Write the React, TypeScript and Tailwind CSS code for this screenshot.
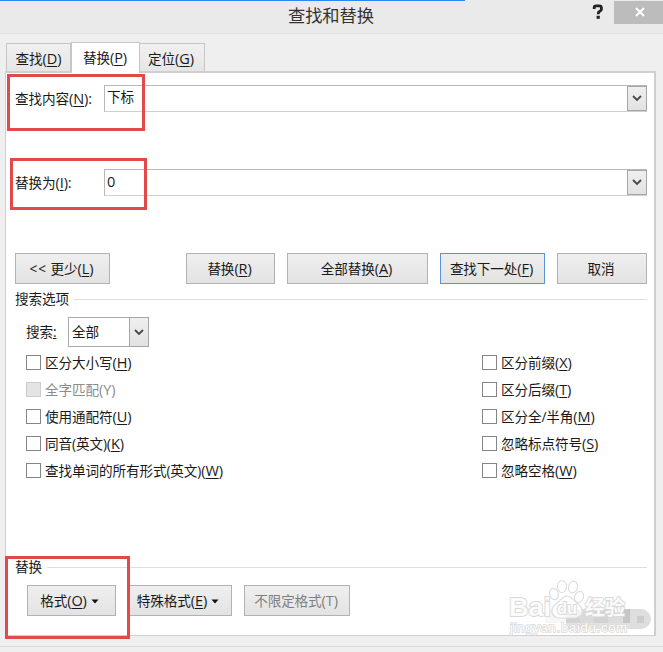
import React from "react";
import clsx from "clsx";

const Key: React.FC<{ k: string; colon?: boolean }> = ({ k, colon }) => (
  <span className="text-[14.5px]">
    (<span className="underline underline-offset-2">{k}</span>){colon && ":"}
  </span>
);

const Caret: React.FC = () => (
  <svg width="8" height="5" viewBox="0 0 8 5" className="ml-1 mr-0.5 shrink-0">
    <path d="M0.5 0.5h7L4 4.5z" fill="#111" />
  </svg>
);

const DropButton: React.FC = () => (
  <span className="flex h-full w-5 shrink-0 items-center justify-center border border-[#a6a6a6] bg-linear-to-b from-[#efefef] to-[#e2e2e2]">
    <svg width="10" height="7" viewBox="0 0 10 7">
      <path d="M1 1l4 4 4-4" fill="none" stroke="#484848" strokeWidth="1.8" />
    </svg>
  </span>
);

type ButtonProps = {
  className: string;
  children: React.ReactNode;
  primary?: boolean;
  disabled?: boolean;
};

const Button: React.FC<ButtonProps> = ({
  className,
  children,
  primary,
  disabled,
}) => (
  <button
    type="button"
    disabled={disabled}
    className={clsx(
      "flex h-[31px] shrink-0 items-center justify-center whitespace-nowrap border bg-linear-to-b from-[#efefef] to-[#e3e3e3] pr-[2px] pt-px",
      primary ? "border-[#5795d6]" : "border-[#b2b2b2]",
      disabled && "text-[#7f7f7f]",
      className
    )}
  >
    {children}
  </button>
);

type Option = { label: string; k: string; disabled?: boolean };

const leftOptions: Option[] = [
  { label: "区分大小写", k: "H" },
  { label: "全字匹配", k: "Y", disabled: true },
  { label: "使用通配符", k: "U" },
  { label: "同音(英文)", k: "K" },
  { label: "查找单词的所有形式(英文)", k: "W" },
];

const rightOptions: Option[] = [
  { label: "区分前缀", k: "X" },
  { label: "区分后缀", k: "T" },
  { label: "区分全/半角", k: "M" },
  { label: "忽略标点符号", k: "S" },
  { label: "忽略空格", k: "W" },
];

const OptionList: React.FC<{ options: Option[] }> = ({ options }) => (
  <div className="flex flex-col">
    {options.map(({ label, k, disabled }) => (
      <label
        key={label}
        className={clsx(
          "flex h-[27px] items-center whitespace-nowrap",
          disabled && "text-[#8c8c8c]"
        )}
      >
        <span
          className={clsx(
            "mr-1 size-[15px] border",
            disabled
              ? "border-[#cccccc] bg-[#e4e4e4]"
              : "border-[#858585] bg-white"
          )}
        />
        <span>
          {label}
          {disabled ? <span className="text-[14.5px]">({k})</span> : <Key k={k} />}
        </span>
      </label>
    ))}
  </div>
);

const GroupTitle: React.FC<{ title: string }> = ({ title }) => (
  <div className="flex h-5 items-center gap-[5px]">
    <span>{title}</span>
    <span className="h-px flex-1 bg-[#dedede]" />
  </div>
);

const Watermark: React.FC = () => (
  <svg
    width="160"
    height="66"
    viewBox="0 0 160 66"
    className="absolute left-[503px] top-[576px]"
  >
    <g fill="#dedede">
      <rect x="42" y="33" width="21" height="14" fill="#f6f6f6" />
      <rect x="63" y="33" width="14" height="14" fill="#d2d2d2" />
      <rect x="77" y="33" width="14" height="14" fill="#dadada" />
      <rect x="91" y="33" width="14" height="14" fill="#d2d2d2" />
      <rect x="105" y="33" width="15" height="14" fill="#dcdcdc" />
      <rect x="120" y="33" width="7" height="14" fill="#c6c6c6" />
      <path d="M127 33h11a10 10 0 0 1 0 20h-11z" />
      <rect x="134" y="40" width="7" height="7" fill="#cccccc" />
      <rect x="63" y="47" width="64" height="6" fill="#e2e2e2" />
    </g>
    <g fill="#fff" fillOpacity="0.75" stroke="#dedede" strokeWidth="1.2">
      <ellipse cx="51" cy="18" rx="4.3" ry="5.8" transform="rotate(-15 51 18)" />
      <ellipse cx="59" cy="10.5" rx="4.5" ry="6" />
      <ellipse cx="70" cy="11" rx="4.5" ry="6" transform="rotate(14 70 11)" />
      <ellipse cx="76" cy="21" rx="4.3" ry="5.8" transform="rotate(22 76 21)" />
      <path d="M64 20c-5 0-6 4-10 7-4 3-6 6-5 10 2 6 8 5 15 5s13 1 15-5c1-4-1-7-5-10-4-3-5-7-10-7z" />
    </g>
    <g
      fill="#fff"
      fillOpacity="0.9"
      stroke="#dadada"
      strokeWidth="1.8"
      paintOrder="stroke"
      fontFamily="'Liberation Sans', 'Noto Sans CJK SC', sans-serif"
      fontWeight="bold"
    >
      <text x="6" y="40" fontSize="26" textLength="42" lengthAdjust="spacingAndGlyphs">
        Bai
      </text>
      <text x="54" y="38" fontSize="17" textLength="20" lengthAdjust="spacingAndGlyphs">
        du
      </text>
      <text x="82" y="39" fontSize="20" textLength="40">
        经验
      </text>
      <text
        x="7"
        y="56"
        fontSize="13"
        strokeWidth="1.5"
        textLength="117"
        fontWeight="normal"
      >
        jingyan.baidu.com
      </text>
    </g>
  </svg>
);

const App: React.FC = () => {
  return (
    <div className="relative h-[652px] w-[663px] overflow-hidden bg-[#efefef] font-['Open_Sans','Noto_Sans_CJK_SC',sans-serif] text-[13.6px] leading-5 tracking-[-0.1px] text-[#1a1a1a]">
      <header className="flex h-[34px] items-start border-b border-[#dfdfdf] bg-[#eaeaea]">
        <h1 className="w-[590px] pl-[288px] pt-1 text-[17.3px] leading-6 text-[#333]">
          查找和替换
        </h1>
        <svg width="16" height="24" viewBox="0 0 16 24">
          <path
            d="M4.2 9V7.5Q4.2 5.8 6.3 5.8h2.9q2.2 0 2.2 2v1.4q0 1.2-1.3 1.9-2 1-2 3.2"
            fill="none"
            stroke="#222"
            strokeWidth="2.8"
          />
          <path d="M6.6 15.8h3.2v3H6.6z" fill="#222" />
        </svg>
        <span className="ml-2 mt-px flex h-[23px] w-[49px] items-center justify-center bg-[#bcbcbc] pb-0.5">
          <svg width="10" height="10" viewBox="0 0 10 10" className="ml-0.5">
            <path d="M1 1l8 8M9 1L1 9" stroke="#fff" strokeWidth="1.9" />
          </svg>
        </span>
      </header>
      <span className="absolute left-0 top-0 h-px w-[465px] bg-[#2b87f5]" />

      <nav className="flex h-[37px] items-end pl-[6px]">
        <span className="flex h-7 w-[65px] items-center justify-center border border-b-0 border-[#c6c6c6] bg-linear-to-b from-[#f0f0f0] to-[#e6e6e6] pt-0.5">
          <span>
            查找
            <Key k="D" />
          </span>
        </span>
        <span className="relative z-10 -mb-0.5 flex h-[31px] w-[69px] items-center justify-center border border-b-0 border-[#c6c6c6] bg-white pr-px">
          <span>
            替换
            <Key k="P" />
          </span>
        </span>
        <span className="flex h-7 w-[65px] items-center justify-center border border-b-0 border-l-0 border-[#c6c6c6] bg-linear-to-b from-[#f0f0f0] to-[#e6e6e6] pr-0.5 pt-0.5">
          <span>
            定位
            <Key k="G" />
          </span>
        </span>
      </nav>

      <main className="ml-[5px] h-[565px] w-[651px] border border-r-2 border-t-2 border-[#cfcfcf] bg-white pl-[9px] pr-[7px]">
        <div className="mt-3 flex h-[27px]">
          <span className="w-[89px] pt-1">
            查找内容
            <Key k="N" colon />
          </span>
          <div className="flex flex-1 border border-r-0 border-[#b8b8b8] border-b-[#cfcfcf]">
            <span className="flex-1 pl-[2px] pt-px">下标</span>
            <DropButton />
          </div>
        </div>

        <div className="mt-[57px] flex h-[27px]">
          <span className="w-[89px] pt-1">
            替换为
            <Key k="I" colon />
          </span>
          <div className="flex flex-1 border border-r-0 border-[#b8b8b8] border-b-[#cfcfcf]">
            <span className="flex-1 pl-[2px] pt-[2px] text-[14.5px]">0</span>
            <DropButton />
          </div>
        </div>

        <div className="mt-[57px] flex">
          <Button className="w-[95px]">
            <span>
              <span className="tracking-[1px]">&lt;&lt;</span> 更少
              <Key k="L" />
            </span>
          </Button>
          <Button className="ml-[76px] w-[89px]">
            替换
            <Key k="R" />
          </Button>
          <Button className="ml-3 w-[141px]">
            全部替换
            <Key k="A" />
          </Button>
          <Button primary className="ml-3 w-[105px]">
            查找下一处
            <Key k="F" />
          </Button>
          <Button className="ml-3 w-[90px]">取消</Button>
        </div>

        <div className="mt-[5px]">
          <GroupTitle title="搜索选项" />
        </div>
        <div className="mt-2 flex h-[30px] items-center pl-[11px]">
          <span className="w-[42px]">
            搜索<span className="underline">:</span>
          </span>
          <div className="flex h-[30px] w-[81px] border border-[#a9a9a9]">
            <span className="flex-1 pl-[3px] pt-1">全部</span>
            <span className="-my-px -mr-px flex">
              <DropButton />
            </span>
          </div>
        </div>
        <div className="mt-[2px] flex pl-[11px]">
          <div className="w-[456px]">
            <OptionList options={leftOptions} />
          </div>
          <OptionList options={rightOptions} />
        </div>

        <div className="mt-[73px]">
          <GroupTitle title="替换" />
        </div>
        <div className="mt-2 flex pl-3">
          <Button className="w-[89px]">
            格式
            <Key k="O" />
            <Caret />
          </Button>
          <Button className="ml-3 w-[104px]">
            特殊格式
            <Key k="E" />
            <Caret />
          </Button>
          <Button disabled className="ml-3 w-[106px]">
            不限定格式<span className="text-[14.5px]">(T)</span>
          </Button>
        </div>
      </main>
      <div className="mt-[10px] h-px bg-[#dadada]" />

      {/* highlight frames */}
      <span className="absolute left-[7px] top-[74px] z-20 h-[57px] w-[138px] border-3 border-[#e24a49]" />
      <span className="absolute left-[10px] top-[158px] z-20 h-[52px] w-[137px] border-3 border-[#e24a49]" />
      <span className="absolute left-[5px] top-[556px] z-20 h-[83px] w-[125px] border-3 border-[#e24a49]" />

      <Watermark />
    </div>
  );
};

export default App;
